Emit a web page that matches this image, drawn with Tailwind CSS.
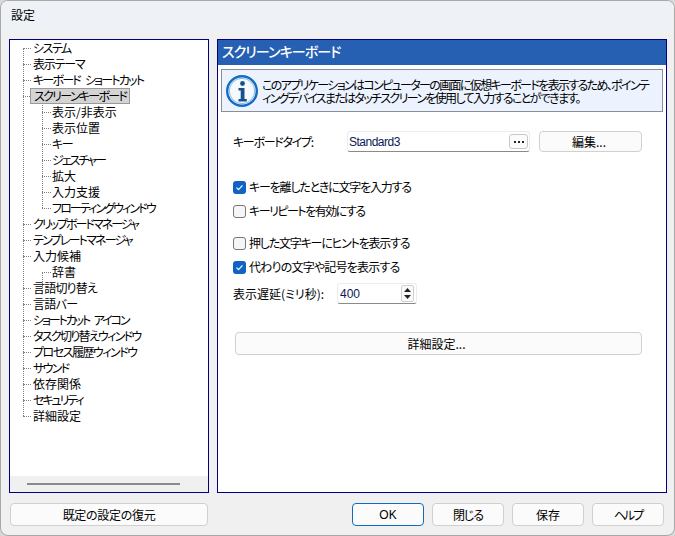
<!DOCTYPE html>
<html lang="ja"><head><meta charset="utf-8">
<script src="https://cdn.jsdelivr.net/npm/@tailwindcss/browser@4"></script>
</head>
<body class="bg-[#d8d8d8]">
<div class="w-[675px] h-[536px] overflow-hidden flex flex-col rounded-[8px] border border-[#a8a8a8] bg-[#f0f0f0] text-[12px] leading-[16px] text-black font-['Noto_Sans_CJK_JP','Noto_Sans',sans-serif] [font-feature-settings:'palt']">
  <div class="h-[30px] shrink-0 bg-[#eef2f7] pl-[10px] pt-[6px]">設定</div>
  <div class="flex gap-[8px] pl-[8px] pt-[8px] h-[462px] shrink-0">
    <div class="w-[200px] h-[454px] border border-[#000080] bg-white flex flex-col">
      <div class="relative flex-1 pl-[23px] whitespace-nowrap">
        <div class="absolute left-[13px] top-[8px] h-[368px] border-l border-dotted border-[#808080]"></div>
        <div class="absolute left-[32px] top-[56px] h-[112px] border-l border-dotted border-[#808080]"></div>
        <div class="absolute left-[32px] top-[232px] h-[16px] border-l border-dotted border-[#808080]"></div>
        <div class="h-[16px] relative tracking-[-1.5px]"><span class="absolute left-[-10px] top-[8px] w-[8px] border-t border-dotted border-[#808080]"></span>システム</div>
        <div class="h-[16px] relative tracking-[-1.2px]"><span class="absolute left-[-10px] top-[8px] w-[8px] border-t border-dotted border-[#808080]"></span>表示テーマ</div>
        <div class="h-[16px] relative tracking-[-1.8px] [word-spacing:4px]"><span class="absolute left-[-10px] top-[8px] w-[8px] border-t border-dotted border-[#808080]"></span>キーボード ショートカット</div>
        <div class="h-[16px] relative"><span class="absolute left-[-10px] top-[8px] w-[7px] border-t border-dotted border-[#808080]"></span><span class="absolute left-[-3px] top-0 w-[100px] h-[16px] pl-[3px] bg-[#d4d4d4] border border-[#999] leading-[14px] tracking-[-1.7px]">スクリーンキーボード</span></div>
        <div class="h-[16px] relative pl-[19px]"><span class="absolute left-[9px] top-[8px] w-[9px] border-t border-dotted border-[#808080]"></span>表示/非表示</div>
        <div class="h-[16px] relative pl-[19px]"><span class="absolute left-[9px] top-[8px] w-[9px] border-t border-dotted border-[#808080]"></span>表示位置</div>
        <div class="h-[16px] relative pl-[19px] tracking-[-1.5px]"><span class="absolute left-[9px] top-[8px] w-[9px] border-t border-dotted border-[#808080]"></span>キー</div>
        <div class="h-[16px] relative pl-[19px] tracking-[-2px]"><span class="absolute left-[9px] top-[8px] w-[9px] border-t border-dotted border-[#808080]"></span>ジェスチャー</div>
        <div class="h-[16px] relative pl-[19px]"><span class="absolute left-[9px] top-[8px] w-[9px] border-t border-dotted border-[#808080]"></span>拡大</div>
        <div class="h-[16px] relative pl-[19px]"><span class="absolute left-[9px] top-[8px] w-[9px] border-t border-dotted border-[#808080]"></span>入力支援</div>
        <div class="h-[16px] relative pl-[19px] tracking-[-1.9px]"><span class="absolute left-[9px] top-[8px] w-[9px] border-t border-dotted border-[#808080]"></span>フローティングウィンドウ</div>
        <div class="h-[16px] relative tracking-[-2px]"><span class="absolute left-[-10px] top-[8px] w-[8px] border-t border-dotted border-[#808080]"></span>クリップボードマネージャ</div>
        <div class="h-[16px] relative tracking-[-1.8px]"><span class="absolute left-[-10px] top-[8px] w-[8px] border-t border-dotted border-[#808080]"></span>テンプレートマネージャ</div>
        <div class="h-[16px] relative"><span class="absolute left-[-10px] top-[8px] w-[8px] border-t border-dotted border-[#808080]"></span>入力候補</div>
        <div class="h-[16px] relative pl-[19px]"><span class="absolute left-[9px] top-[8px] w-[9px] border-t border-dotted border-[#808080]"></span>辞書</div>
        <div class="h-[16px] relative tracking-[-0.8px]"><span class="absolute left-[-10px] top-[8px] w-[8px] border-t border-dotted border-[#808080]"></span>言語切り替え</div>
        <div class="h-[16px] relative tracking-[-0.7px]"><span class="absolute left-[-10px] top-[8px] w-[8px] border-t border-dotted border-[#808080]"></span>言語バー</div>
        <div class="h-[16px] relative tracking-[-2.1px] [word-spacing:4px]"><span class="absolute left-[-10px] top-[8px] w-[8px] border-t border-dotted border-[#808080]"></span>ショートカット アイコン</div>
        <div class="h-[16px] relative tracking-[-1.7px]"><span class="absolute left-[-10px] top-[8px] w-[8px] border-t border-dotted border-[#808080]"></span>タスク切り替えウィンドウ</div>
        <div class="h-[16px] relative tracking-[-1.5px]"><span class="absolute left-[-10px] top-[8px] w-[8px] border-t border-dotted border-[#808080]"></span>プロセス履歴ウィンドウ</div>
        <div class="h-[16px] relative tracking-[-1.7px]"><span class="absolute left-[-10px] top-[8px] w-[8px] border-t border-dotted border-[#808080]"></span>サウンド</div>
        <div class="h-[16px] relative"><span class="absolute left-[-10px] top-[8px] w-[8px] border-t border-dotted border-[#808080]"></span>依存関係</div>
        <div class="h-[16px] relative tracking-[-2.1px]"><span class="absolute left-[-10px] top-[8px] w-[8px] border-t border-dotted border-[#808080]"></span>セキュリティ</div>
        <div class="h-[16px] relative"><span class="absolute left-[-10px] top-[8px] w-[8px] border-t border-dotted border-[#808080]"></span>詳細設定</div>
      </div>
      <div class="h-[16px] shrink-0 bg-[#f0f0f0] flex items-center pl-[17px]"><div class="w-[153px] h-[2px] bg-[#8a8a8a]"></div></div>
    </div>
    <div class="w-[450px] h-[454px] border border-[#000080] bg-white">
      <div class="h-[25px] bg-[#2560b2] text-white text-[14px] leading-[22px] pl-[4px] font-medium tracking-[-0.9px]">スクリーンキーボード</div>
      <div class="mx-[3px] mt-[4px] h-[43px] border border-[#8a8f96] bg-[#ecf3fe] flex items-center pl-[4px] gap-[4px]">
        <svg class="w-[32px] h-[32px] shrink-0" viewBox="0 0 32 32"><circle cx="16" cy="16" r="14.800" fill="#fff" stroke="#126cc4" stroke-width="2.400"/><circle cx="16" cy="16" r="12.700" fill="#f6f9fc" stroke="#86b8e6" stroke-width="1"/><circle cx="16.500" cy="8.500" r="2.400" fill="#14508f"/><path d="M12.500 13h6v11h2.300v2.500h-8.300V24h2.200v-8.500h-2.200z" fill="#14508f"/></svg>
        <div class="leading-[13px] whitespace-nowrap tracking-[-1.65px]">このアプリケーションはコンピューターの画面に仮想キーボードを表示するため、ポインテ<br>ィングデバイスまたはタッチスクリーンを使用して入力することができます。</div>
      </div>
      <div class="pl-[15px] pr-[24px] pt-[19px]">
        <div class="flex items-center h-[21px]">
          <span class="w-[114px] tracking-[-1.3px]">キーボードタイプ:</span>
          <div class="w-[183px] h-[21px] bg-white border border-[#ececec] border-b-[#8a8a8a] rounded-[3px] flex items-center justify-between pl-[1px] pr-[1px] text-[#0b1a5a] font-['Liberation_Sans',sans-serif] tracking-[-0.5px]">Standard3
            <span class="w-[19px] h-[15px] border border-[#c8c8c8] rounded-[3px] bg-[#fbfbfb] flex items-center justify-center gap-[2px]"><i class="w-[2px] h-[2px] bg-[#222]"></i><i class="w-[2px] h-[2px] bg-[#222]"></i><i class="w-[2px] h-[2px] bg-[#222]"></i></span>
          </div>
          <button class="ml-[9px] w-[103px] h-[21px] bg-[#fbfbfb] border border-[#d0d0d0] rounded-[4px] pr-[3px]">編集...</button>
        </div>
        <div class="mt-[27px] flex flex-col">
          <label class="flex items-center gap-[3px] h-[16px] tracking-[-1.2px]"><span class="w-[13px] h-[13px] rounded-[3px] bg-[#0f63c2] flex items-center justify-center"><svg class="w-[9px] h-[9px]" viewBox="0 0 9 9"><path d="M1.500 4.700l2 2 4-4.400" fill="none" stroke="#fff" stroke-width="1.200"/></svg></span>キーを離したときに文字を入力する</label>
          <label class="flex items-center gap-[3px] h-[16px] mt-[8px] tracking-[-1.5px]"><span class="w-[13px] h-[13px] rounded-[3px] bg-[#f6f6f6] border border-[#777]"></span>キーリピートを有効にする</label>
          <label class="flex items-center gap-[3px] h-[16px] mt-[16px] tracking-[-1.2px]"><span class="w-[13px] h-[13px] rounded-[3px] bg-[#f6f6f6] border border-[#777]"></span>押した文字キーにヒントを表示する</label>
          <label class="flex items-center gap-[3px] h-[16px] mt-[8px] tracking-[-0.8px]"><span class="w-[13px] h-[13px] rounded-[3px] bg-[#0f63c2] flex items-center justify-center"><svg class="w-[9px] h-[9px]" viewBox="0 0 9 9"><path d="M1.500 4.700l2 2 4-4.400" fill="none" stroke="#fff" stroke-width="1.200"/></svg></span>代わりの文字や記号を表示する</label>
        </div>
        <div class="mt-[8px] flex items-center h-[21px]">
          <span class="w-[104px]">表示遅延(ミリ秒):</span>
          <div class="w-[80px] h-[21px] border border-[#ececec] border-b-[#8a8a8a] rounded-[3px] flex items-center justify-between pl-[2px] pr-[2px] text-[#0b1a5a] font-['Liberation_Sans',sans-serif]">400
            <span class="w-[13px] h-[17px] border border-[#d0d0d0] rounded-[2px] bg-[#fafafa] flex flex-col items-center justify-center gap-[3px]"><svg class="w-[7px] h-[4px]" viewBox="0 0 7 4"><path d="M3.500 0L7 4H0z" fill="#222"/></svg><svg class="w-[7px] h-[4px]" viewBox="0 0 7 4"><path d="M0 0h7L3.500 4z" fill="#222"/></svg></span>
          </div>
        </div>
        <button class="mt-[28px] ml-[2px] w-[407px] h-[23px] bg-[#fbfbfb] border border-[#d0d0d0] rounded-[4px] pr-[4px]">詳細設定...</button>
      </div>
    </div>
  </div>
  <div class="flex pl-[9px] pt-[10px]">
    <button class="w-[198px] h-[23px] bg-[#fbfbfb] border border-[#d0d0d0] rounded-[4px] tracking-[-0.3px]">既定の設定の復元</button>
    <div class="ml-[144px] flex gap-[8px]">
      <button class="w-[72px] h-[23px] bg-[#fbfbfb] border border-[#0f6cc4] rounded-[4px] font-['Liberation_Sans',sans-serif]">OK</button>
      <button class="w-[72px] h-[23px] bg-[#fbfbfb] border border-[#d0d0d0] rounded-[4px] tracking-[-1px]">閉じる</button>
      <button class="w-[72px] h-[23px] bg-[#fbfbfb] border border-[#d0d0d0] rounded-[4px]">保存</button>
      <button class="w-[72px] h-[23px] bg-[#fbfbfb] border border-[#d0d0d0] rounded-[4px] tracking-[-2px]">ヘルプ</button>
    </div>
  </div>
</div>
</body></html>
